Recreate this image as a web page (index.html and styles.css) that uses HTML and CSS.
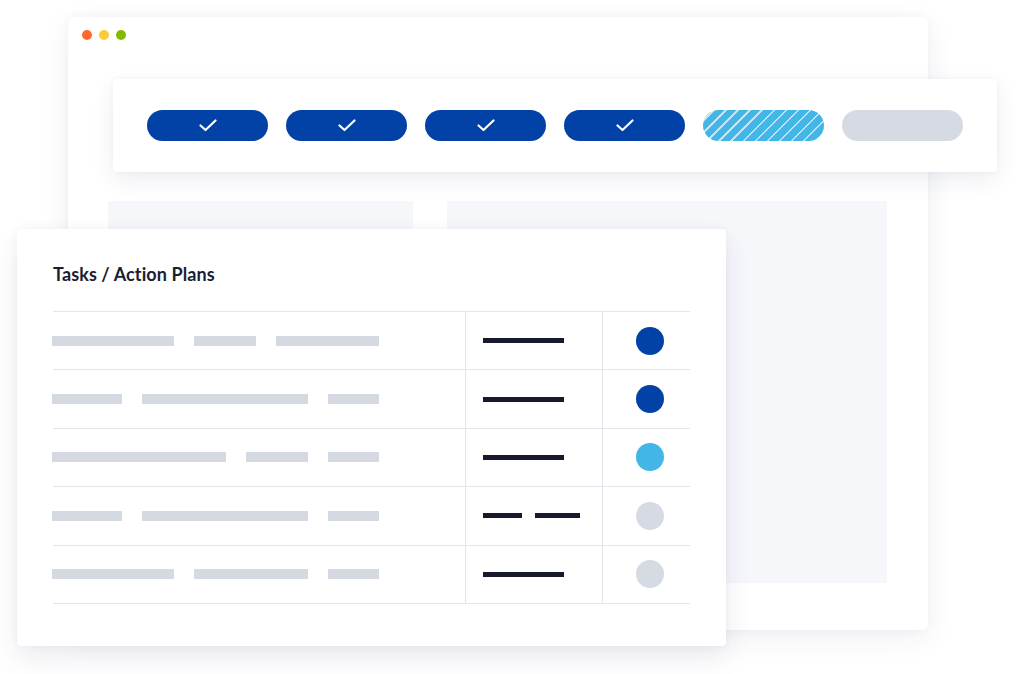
FILE: index.html
```html
<!DOCTYPE html>
<html lang="en">
<head>
<meta charset="utf-8">
<title>Tasks / Action Plans</title>
<link rel="stylesheet" href="styles.css">
</head>
<body>
<div class="stage">
  <div class="window">
    <div class="dots">
      <span class="dot dot-red"></span>
      <span class="dot dot-yellow"></span>
      <span class="dot dot-green"></span>
    </div>
    <div class="panels">
      <div class="panel panel-left"></div>
      <div class="panel panel-right"></div>
    </div>
  </div>

  <div class="progress-card">
    <div class="pill pill-done"><svg class="check" viewBox="0 0 18 13" width="18" height="13"><path d="M1.5 6.5 L6.5 11 L16.5 1.5" fill="none" stroke="#fff" stroke-width="2.2" stroke-linecap="round" stroke-linejoin="round"/></svg></div>
    <div class="pill pill-done"><svg class="check" viewBox="0 0 18 13" width="18" height="13"><path d="M1.5 6.5 L6.5 11 L16.5 1.5" fill="none" stroke="#fff" stroke-width="2.2" stroke-linecap="round" stroke-linejoin="round"/></svg></div>
    <div class="pill pill-done"><svg class="check" viewBox="0 0 18 13" width="18" height="13"><path d="M1.5 6.5 L6.5 11 L16.5 1.5" fill="none" stroke="#fff" stroke-width="2.2" stroke-linecap="round" stroke-linejoin="round"/></svg></div>
    <div class="pill pill-done"><svg class="check" viewBox="0 0 18 13" width="18" height="13"><path d="M1.5 6.5 L6.5 11 L16.5 1.5" fill="none" stroke="#fff" stroke-width="2.2" stroke-linecap="round" stroke-linejoin="round"/></svg></div>
    <div class="pill pill-active"></div>
    <div class="pill pill-todo"></div>
  </div>

  <div class="tasks-card">
    <h2 class="tasks-title">Tasks / Action Plans</h2>
    <div class="table">
      <div class="row">
        <div class="cell cell-main"><span class="bar" style="width:122px"></span><span class="bar" style="width:62px"></span><span class="bar" style="width:103px"></span></div>
        <div class="cell cell-mid"><span class="dark" style="width:81px"></span></div>
        <div class="cell cell-status"><span class="status status-blue"></span></div>
      </div>
      <div class="row">
        <div class="cell cell-main"><span class="bar" style="width:70px"></span><span class="bar" style="width:166px"></span><span class="bar" style="width:51px"></span></div>
        <div class="cell cell-mid"><span class="dark" style="width:81px"></span></div>
        <div class="cell cell-status"><span class="status status-blue"></span></div>
      </div>
      <div class="row">
        <div class="cell cell-main"><span class="bar" style="width:174px"></span><span class="bar" style="width:62px"></span><span class="bar" style="width:51px"></span></div>
        <div class="cell cell-mid"><span class="dark" style="width:81px"></span></div>
        <div class="cell cell-status"><span class="status status-light"></span></div>
      </div>
      <div class="row">
        <div class="cell cell-main"><span class="bar" style="width:70px"></span><span class="bar" style="width:166px"></span><span class="bar" style="width:51px"></span></div>
        <div class="cell cell-mid cell-split"><span class="dark" style="width:39px"></span><span class="dark" style="width:45px"></span></div>
        <div class="cell cell-status"><span class="status status-grey"></span></div>
      </div>
      <div class="row">
        <div class="cell cell-main"><span class="bar" style="width:122px"></span><span class="bar" style="width:114px"></span><span class="bar" style="width:51px"></span></div>
        <div class="cell cell-mid"><span class="dark" style="width:81px"></span></div>
        <div class="cell cell-status"><span class="status status-grey"></span></div>
      </div>
    </div>
  </div>
</div>
</body>
</html>
```

FILE: styles.css
```css
* { box-sizing: border-box; }

html, body {
  margin: 0;
  padding: 0;
  background: #ffffff;
}

body {
  font-family: "Lato", "Open Sans", "Liberation Sans", sans-serif;
  color: #1a1d2e;
}

.stage {
  position: relative;
  width: 1024px;
  height: 674px;
  overflow: hidden;
  padding-top: 17px;
  padding-left: 68px;
}

/* background browser window */
.window {
  width: 860px;
  height: 613px;
  background: #ffffff;
  border-radius: 6px;
  box-shadow: 0 8px 30px rgba(30, 40, 90, 0.07), 0 0 8px rgba(30, 40, 90, 0.04);
  padding: 13px 0 0 14px;
}

.dots {
  display: flex;
  gap: 7px;
  height: 10px;
}

.dot {
  width: 10px;
  height: 10px;
  border-radius: 50%;
}
.dot-red { background: #ff6a2b; }
.dot-yellow { background: #f9cd3a; }
.dot-green { background: #80bb00; }

.panels {
  display: flex;
  gap: 34px;
  margin-top: 161px;
  margin-left: 26px;
}

.panel {
  height: 382px;
  background: #f6f7fb;
}
.panel-left { width: 305px; }
.panel-right { width: 440px; }

/* progress card */
.progress-card {
  position: absolute;
  left: 113px;
  top: 79px;
  width: 884px;
  height: 93px;
  background: #ffffff;
  border-radius: 4px;
  box-shadow: 0 8px 24px rgba(30, 40, 90, 0.08), 0 0 6px rgba(30, 40, 90, 0.04);
  display: flex;
  align-items: center;
  gap: 18px;
  padding-left: 34px;
}

.pill {
  width: 121px;
  height: 31px;
  border-radius: 16px;
  display: flex;
  align-items: center;
  justify-content: center;
}

.pill-done { background: #0241a6; }

.pill-active {
  background: repeating-linear-gradient(
    135deg,
    #42b6e7 0px,
    #42b6e7 7px,
    #bfe6f8 7px,
    #bfe6f8 8.5px
  );
}

.pill-todo { background: #d6dae3; }

.check { display: block; }

/* tasks card */
.tasks-card {
  position: absolute;
  left: 17px;
  top: 229px;
  width: 709px;
  height: 417px;
  background: #ffffff;
  border-radius: 4px;
  box-shadow: 0 12px 28px rgba(30, 40, 90, 0.09), 0 0 8px rgba(30, 40, 90, 0.04);
  padding: 34px 36px 0 36px;
}

.tasks-title {
  margin: 0;
  font-size: 18px;
  font-weight: 700;
  line-height: 22px;
  letter-spacing: 0.1px;
  color: #1b1e30;
}

.table {
  margin-top: 26px;
  width: 637px;
  border-top: 1px solid #e3e6ee;
}

.row {
  display: grid;
  grid-template-columns: 412px 137px 88px;
  height: 58.4px;
  border-bottom: 1px solid #e3e6ee;
}

.cell {
  display: flex;
  align-items: center;
}

.cell-main {
  gap: 20px;
  margin-left: -1px;
}

.cell-mid {
  border-left: 1px solid #e1e4ec;
  padding-left: 17px;
}

.cell-split { gap: 13px; }

.cell-status {
  border-left: 1px solid #e1e4ec;
  padding-left: 33px;
}

.bar {
  display: block;
  height: 10px;
  background: #d5d9e2;
}

.dark {
  display: block;
  height: 5px;
  background: #171a2d;
}

.status {
  display: block;
  width: 28px;
  height: 28px;
  border-radius: 50%;
}
.status-blue { background: #0241a6; }
.status-light { background: #42b6e7; }
.status-grey { background: #d6dae3; }
```
